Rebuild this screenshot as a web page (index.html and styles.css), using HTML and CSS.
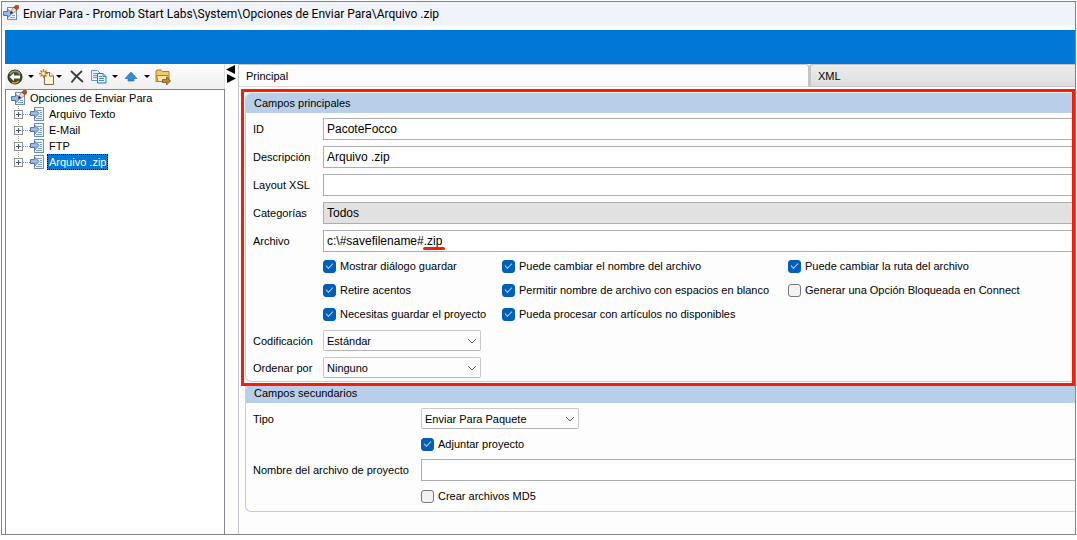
FILE: index.html
```
<!DOCTYPE html>
<html lang="es">
<head>
    <meta charset="UTF-8">
    <meta name="viewport" content="width=device-width, initial-scale=1.0">
    <title>Enviar Para</title>
    <link rel="stylesheet" href="styles.css">
</head>
<body>
    <svg class="defs" width="0" height="0">
        <symbol id="doc" viewBox="0 0 14 14">
            <rect x="4.500" y="0.500" width="9" height="13" fill="#edf4fd" stroke="#6c8dc0"/>
            <path d="M7 3.500h5M10 5.500h2M10 7.500h2M8 9.500h4M6 11.500h6" stroke="#7d9ccb"/>
            <path d="M0.500 4.500h4v-2.500l4.500 4.500-4.500 4.500v-2.500h-4z" fill="#9ab8e4" stroke="#56749f"/>
        </symbol>
        <symbol id="send" viewBox="0 0 16 16">
            <rect x="4.500" y="2.500" width="9" height="12" fill="#edf4fd" stroke="#6c8dc0"/>
            <path d="M9 10.500h3M7 12.500h5" stroke="#7d9ccb"/>
            <path d="M0.500 6.500h4v-2.500l4.500 4.500-4.500 4.500v-2.500h-4z" fill="#9ab8e4" stroke="#56749f"/>
            <path d="M7 9l1-3.500 2.500 2.500z" fill="#222"/>
            <path d="M8 5.500l3-3.500 3 3-3.500 3z" fill="#f0ddbf" stroke="#8a6a48" stroke-width=".7"/>
            <path d="M10.800 2.200l2-2 2.700.5.3 2.300-2 2z" fill="#b4541c" stroke="#7a3412" stroke-width=".6"/>
        </symbol>
        <symbol id="chevron" viewBox="0 0 10 6">
            <path d="M1 1l4 4 4-4" fill="none" stroke="#555"/>
        </symbol>
    </svg>

    <div class="window">
        <header class="title">
            <svg width="16" height="16"><use href="#send"/></svg>
            <span>Enviar Para - Promob Start Labs\System\Opciones de Enviar Para\Arquivo .zip</span>
        </header>
        <div class="banner"></div>

        <div class="main">
            <aside class="side">
                <div class="toolbar">
                    <button class="tool" aria-label="Volver">
                        <svg width="16" height="16" viewBox="0 0 16 16">
                            <circle cx="8" cy="8" r="7" fill="#4a4a32" stroke="#22221a"/>
                            <path d="M3 5a6 6 0 0 1 10 0" fill="none" stroke="#9b9b83" stroke-width="1.500"/>
                            <path d="M2.500 8l4.500-4v2.500h6v3h-6v2.500z" fill="#fff"/>
                            <path d="M5 13.500q4 1.500 7-1.500" fill="none" stroke="#d09a35" stroke-width="1.500"/>
                        </svg>
                    </button>
                    <button class="caret" aria-label="Historial"></button>
                    <button class="tool" aria-label="Nuevo">
                        <svg width="16" height="16" viewBox="0 0 16 16">
                            <path d="M5.500 3.500h5l4 3.500v8.500h-9z" fill="#fff4cf" stroke="#75695a"/>
                            <path d="M10.500 3.500v3.500h4" fill="#fff" stroke="#75695a"/>
                            <path d="M4.500 0v9M0 4.500h9M1.500 1.500l6 6M7.500 1.500l-6 6" stroke="#dc7615" stroke-width="1.400"/>
                            <circle cx="4.500" cy="4.500" r="1.800" fill="#ffe29a"/>
                        </svg>
                    </button>
                    <button class="caret narrow" aria-label="Tipos"></button>
                    <button class="tool delete" aria-label="Eliminar">
                        <svg width="16" height="16" viewBox="0 0 16 16">
                            <path d="M2 2q5 5 12 11M13 2q-6 5-10.500 11.500" fill="none" stroke="#3d3d42" stroke-width="1.800"/>
                        </svg>
                    </button>
                    <button class="tool" aria-label="Copiar">
                        <svg width="16" height="16" viewBox="0 0 16 16">
                            <path d="M0.500 1.500h6l2.500 2.500v7.500h-8.500z" fill="#e8f2fd" stroke="#5d9bd8"/>
                            <path d="M2 4.500h4M2 6.500h4M2 8.500h4" stroke="#5d9bd8"/>
                            <path d="M6.500 4.500h5.500l3 3v6.500h-8.500z" fill="#e8f2fd" stroke="#2f73b9"/>
                            <path d="M12 4.500v3h3M8 7.500h3M8 9.500h5M8 11.500h5" fill="none" stroke="#4586c8"/>
                        </svg>
                    </button>
                    <button class="caret" aria-label="Opciones de copia"></button>
                    <button class="tool" aria-label="Subir">
                        <svg width="16" height="16" viewBox="0 0 16 16">
                            <path d="M8 3l6 6.500h-3v2.500h-6v-2.500h-3z" fill="#348bdc" stroke="#2467a8" stroke-width=".6"/>
                        </svg>
                    </button>
                    <button class="caret" aria-label="Mover"></button>
                    <button class="tool" aria-label="Exportar">
                        <svg width="16" height="16" viewBox="0 0 16 16">
                            <path d="M1 12.500v-10.500l1-1h4l1.500 1.500h6.500v10z" fill="#f2c76c" stroke="#b47b22"/>
                            <path d="M3 12.500l-1.500-6h11l1.500 6z" fill="#ffe5a1" stroke="#b47b22"/>
                            <path d="M7.500 10.500h4v-2.500l4 4-4 4v-2.500h-4z" fill="#b98a38" stroke="#6d5227" stroke-width=".8"/>
                        </svg>
                    </button>
                </div>
                <nav class="tree">
                    <div class="node root"><svg width="16" height="16"><use href="#send"/></svg><a href="#">Opciones de Enviar Para</a></div>
                    <ul>
                        <li class="node"><button class="plus" aria-label="Expandir"></button><svg width="14" height="14"><use href="#doc"/></svg><a href="#">Arquivo Texto</a></li>
                        <li class="node"><button class="plus" aria-label="Expandir"></button><svg width="14" height="14"><use href="#doc"/></svg><a href="#">E-Mail</a></li>
                        <li class="node"><button class="plus" aria-label="Expandir"></button><svg width="14" height="14"><use href="#doc"/></svg><a href="#">FTP</a></li>
                        <li class="node"><button class="plus" aria-label="Expandir"></button><svg width="14" height="14"><use href="#doc"/></svg><a href="#" class="active">Arquivo .zip</a></li>
                    </ul>
                </nav>
            </aside>

            <div class="splitter">
                <svg width="10" height="18" viewBox="0 0 10 18"><path d="M9 0v9L0 4.500zM1 9v9l9-4.500z"/></svg>
            </div>

            <main class="content">
                <div class="tabs">
                    <button class="tab active">Principal</button>
                    <button class="tab">XML</button>
                </div>

                <section class="group marked">
                    <h2>Campos principales</h2>
                    <div class="fields">
                        <label for="id">ID</label>
                        <input type="text" id="id" value="PacoteFocco">
                        <label for="desc">Descripción</label>
                        <input type="text" id="desc" value="Arquivo .zip">
                        <label for="xsl">Layout XSL</label>
                        <input type="text" id="xsl">
                        <label for="cat">Categorías</label>
                        <input type="text" id="cat" value="Todos" readonly>
                        <label for="file">Archivo</label>
                        <div class="underlined"><input type="text" id="file" value="c:\#savefilename#.zip"></div>
                    </div>
                    <div class="checks">
                        <label><input type="checkbox" checked>Mostrar diálogo guardar</label>
                        <label><input type="checkbox" checked>Puede cambiar el nombre del archivo</label>
                        <label><input type="checkbox" checked>Puede cambiar la ruta del archivo</label>
                        <label><input type="checkbox" checked>Retire acentos</label>
                        <label><input type="checkbox" checked>Permitir nombre de archivo con espacios en blanco</label>
                        <label><input type="checkbox">Generar una Opción Bloqueada en Connect</label>
                        <label><input type="checkbox" checked>Necesitas guardar el proyecto</label>
                        <label><input type="checkbox" checked>Pueda procesar con artículos no disponibles</label>
                    </div>
                    <div class="fields lists">
                        <label for="cod">Codificación</label>
                        <div class="select"><select id="cod"><option>Estándar</option></select><svg width="10" height="6"><use href="#chevron"/></svg></div>
                        <label for="ord">Ordenar por</label>
                        <div class="select"><select id="ord"><option>Ninguno</option></select><svg width="10" height="6"><use href="#chevron"/></svg></div>
                    </div>
                </section>

                <section class="group second">
                    <h2>Campos secundarios</h2>
                    <div class="fields wide">
                        <label for="tipo">Tipo</label>
                        <div class="select"><select id="tipo"><option>Enviar Para Paquete</option></select><svg width="10" height="6"><use href="#chevron"/></svg></div>
                        <label class="check"><input type="checkbox" checked>Adjuntar proyecto</label>
                        <label for="nombre">Nombre del archivo de proyecto</label>
                        <input type="text" id="nombre">
                        <label class="check"><input type="checkbox">Crear archivos MD5</label>
                    </div>
                </section>
            </main>
        </div>
    </div>
</body>
</html>
```

FILE: styles.css
```
*{
    box-sizing: border-box;
    margin: 0;
    padding: 0;
}
body{
    padding: 1px 1px 5px;
    font: 11px/16px "Liberation Sans", Arial, sans-serif;
    color: #000;
    background: #fff;
}
button, input, select{
    font: inherit;
    color: inherit;
}
button{
    border: 0;
    background: none;
}
a{
    color: inherit;
    text-decoration: none;
}
svg{
    display: block;
    flex: none;
}
ul{
    list-style: none;
}
.defs{
    position: absolute;
}
.window{
    display: flex;
    flex-direction: column;
    min-height: calc(100vh - 6px);
    border: 1px solid #838383;
    background: #fdfdfd;
}
.title{
    display: flex;
    gap: 4px;
    height: 23px;
    padding: 3px 1px;
    font: 12px/18px Roboto, "Segoe UI", sans-serif;
    background: #f0f3f9;
}
.banner{
    height: 34px;
    margin: 5px 0 0 3px;
    background: #0078d7;
}
.main{
    flex: 1;
    display: flex;
    padding-left: 3px;
}

/* left side */
.side{
    flex: none;
    display: flex;
    flex-direction: column;
    width: 220px;
}
.toolbar{
    display: flex;
    align-items: center;
    height: 25px;
    padding-left: 2px;
    border-right: 1px solid #ddd;
    background: linear-gradient(#fdfdfd, #efefef);
}
.caret{
    width: 16px;
    height: 20px;
}
.caret.narrow{
    width: 8px;
}
.caret::before{
    content: "";
    display: block;
    width: 0;
    margin: 0 auto;
    border: 3px solid transparent;
    border-top-color: #000;
    border-bottom: 0;
}
.delete{
    margin: 0 6px;
}
.tree{
    flex: 1;
    padding: 0 5px;
    border: 1px solid #828790;
    border-bottom: 0;
    background: #fff;
}
.node{
    display: flex;
    align-items: center;
    height: 16px;
}
.node a{
    padding: 0 2px;
}
.root{
    gap: 1px;
}
.node a.active{
    color: #fff;
    background: #0078d7;
    outline: 1px dotted #000;
    outline-offset: -1px;
}
.tree ul{
    padding-left: 3px;
}
li.node{
    background: repeating-linear-gradient(#999 0 1px, transparent 1px 2px) 4px 0 / 1px 100% no-repeat;
}
li.node:last-child{
    background-size: 1px 50%;
}
li.node::before{
    content: "";
    order: 1;
    width: 7px;
    border-top: 1px dotted #888;
}
li.node svg{
    order: 2;
}
li.node a{
    order: 3;
    margin-left: 3px;
}
.plus{
    width: 9px;
    height: 9px;
    border: 1px solid #8f8f8f;
    background:
        linear-gradient(#3c5a9a, #3c5a9a) center / 5px 1px no-repeat,
        linear-gradient(#3c5a9a, #3c5a9a) center / 1px 5px no-repeat,
        #fff;
}
.splitter{
    flex: none;
    width: 13px;
    padding: 1px 0 0 1px;
}

/* right side */
.content{
    flex: 1;
    min-width: 0;
    border-left: 1px solid #c4c4c4;
}
.tabs{
    display: grid;
    grid-template-columns: 15fr 7fr;
    height: 23px;
}
.tab{
    padding: 0 7px;
    text-align: left;
    border: 1px solid #c4c4c4;
    border-width: 1px 0 1px 2px;
    border-radius: 3px 0 0 0;
    background: linear-gradient(#ececec, #dedede);
}
.tab.active{
    border-color: #c4c4c4 #c4c4c4 #dcdcdc;
    border-width: 1px 1px 1px 0;
    border-radius: 0 3px 0 0;
    background: #fdfdfd;
}
.group{
    position: relative;
    margin-left: 6px;
    border: 1px solid #b9cfe9;
    border-width: 0 0 1px 1px;
    border-radius: 6px 0 0 6px;
}
.group h2{
    height: 20px;
    padding-left: 8px;
    font: inherit;
    line-height: 20px;
    border-radius: 6px 0 0 0;
    background: #b9cfe9;
}
.marked{
    z-index: 1;
    margin-top: 6px;
    padding-bottom: 3px;
}
/* red highlight round the main fields */
.marked::after{
    content: "";
    position: absolute;
    inset: -4px 0 -5px -5px;
    border: 3px solid #f91c05;
    pointer-events: none;
}
.second{
    margin-top: 1px;
    padding-bottom: 6px;
}
.fields{
    display: grid;
    grid-template-columns: 70px 1fr;
    gap: 6px 0;
    align-items: center;
    padding: 5px 0 0 7px;
}
.fields.lists{
    padding-top: 4px;
}
.fields.wide{
    grid-template-columns: 168px 1fr;
}
.fields input[type=text]{
    display: block;
    width: 100%;
    height: 22px;
    padding: 0 3px;
    font-size: 12px;
    border: 1px solid #abadb3;
    border-right: 0;
    background: #fff;
}
.fields input[readonly]{
    background: #e1e1e1;
}
.underlined{
    position: relative;
}
.underlined::after{
    content: "";
    position: absolute;
    left: 100px;
    bottom: 2px;
    width: 22px;
    height: 3px;
    border-radius: 2px;
    background: #f91c05;
}
.checks{
    display: grid;
    grid-template-columns: 179px 286px 1fr;
    padding: 2px 0 0 77px;
}
.checks label, .check{
    display: flex;
    align-items: center;
    gap: 4px;
    height: 24px;
    white-space: nowrap;
}
.fields .check{
    grid-column: 2;
    height: 18px;
}
input[type=checkbox]{
    appearance: none;
    display: grid;
    place-items: center;
    width: 13px;
    height: 13px;
    border: 1px solid #77747c;
    border-radius: 3px;
    background: #f3f3f3;
}
input[type=checkbox]:checked{
    border-color: #005fb8;
    background: #005fb8;
}
input[type=checkbox]:checked::before{
    content: "";
    width: 6px;
    height: 3px;
    margin-bottom: 2px;
    border: 1px solid #b5d0ea;
    border-width: 0 0 1px 1px;
    transform: rotate(-45deg);
}
.select{
    display: grid;
    align-items: center;
    width: 158px;
}
.select select{
    grid-area: 1 / 1;
    appearance: none;
    height: 21px;
    padding: 0 20px 0 3px;
    border: 1px solid #c8c8c8;
    border-bottom-color: #b4b4b4;
    border-radius: 2px;
    background: #fdfdfd;
}
.select svg{
    grid-area: 1 / 1;
    justify-self: end;
    margin-right: 4px;
    pointer-events: none;
}
```
